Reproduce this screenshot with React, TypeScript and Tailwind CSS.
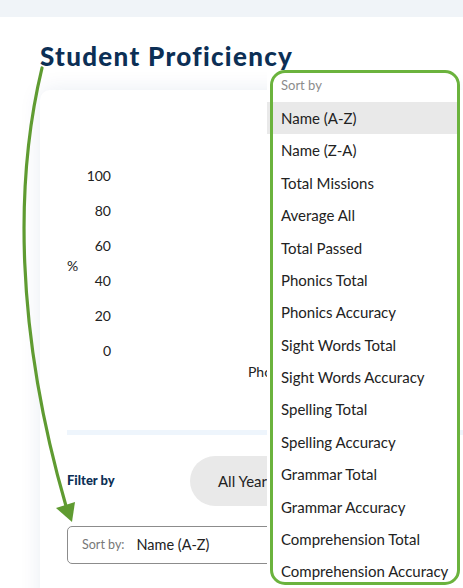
const sortOptions = [
  "Name (A-Z)",
  "Name (Z-A)",
  "Total Missions",
  "Average All",
  "Total Passed",
  "Phonics Total",
  "Phonics Accuracy",
  "Sight Words Total",
  "Sight Words Accuracy",
  "Spelling Total",
  "Spelling Accuracy",
  "Grammar Total",
  "Grammar Accuracy",
  "Comprehension Total",
  "Comprehension Accuracy",
];

const ticks = [100, 80, 60, 40, 20, 0];

export default function App() {
  const selected = "Name (A-Z)";

  return (
    <div className="relative w-[463px] h-[588px] overflow-hidden bg-white font-['Lato','Noto_Sans',sans-serif] text-[#222]">
      {/* Top bar */}
      <div className="h-[17px] bg-[#f0f4f8]" />

      <div className="pl-[40px] pt-[23px]">
        <h1 className="text-[26px] leading-[32px] font-black tracking-[1.3px] text-[#0c2f55] whitespace-nowrap">
          Student Proficiency
        </h1>

        {/* Card */}
        <div className="mt-[18px] h-[520px] rounded-tl-[10px] bg-white shadow-[0_0_22px_rgba(20,60,120,0.09)] pl-[27px]">
          {/* Chart */}
          <div className="pt-[68px] flex">
            <div className="w-[22px] flex items-center pt-[4px]">
              <span className="text-[14px]">%</span>
            </div>
            <div className="flex flex-col w-[22px] items-end">
              {ticks.map((t) => (
                <div key={t} className="h-[35px] flex items-center text-[14px]">
                  {t}
                </div>
              ))}
            </div>
          </div>
          <div className="-mt-[5px] w-[203px] overflow-hidden whitespace-nowrap pl-[181px] h-[17px] text-[14px] leading-[17px]">
            Phonics
          </div>

          {/* Separator */}
          <div className="mt-[50px] h-[5px] bg-[#eef5fc]" />

          {/* Filters */}
          <div className="mt-[21px] flex items-center w-[203px] overflow-hidden">
            <div className="w-[123px] shrink-0 text-[13px] font-black text-[#0c2f55]">Filter by</div>
            <div className="h-[50px] w-[180px] shrink-0 rounded-full bg-[#e9e9e9] flex items-center pl-[28px] text-[15px] whitespace-nowrap">
              All Years
            </div>
          </div>

          <div className="mt-[20px] h-[38px] w-[260px] rounded-[5px] border border-[#8c8c8c] flex items-center pl-[14px]">
            <span className="text-[12.5px] text-[#777]">Sort by:</span>
            <span className="ml-[12px] text-[14.5px]">Name (A-Z)</span>
          </div>
        </div>
      </div>

      {/* Sort dropdown menu */}
      <div className="absolute left-[267px] top-[70px] w-[191px] bg-white">
        <div className="h-[32px] flex items-center pl-[14px] text-[13px] text-[#8c8c8c]">Sort by</div>
        {sortOptions.map((opt) => (
          <div
            key={opt}
            className={`h-[32.4px] flex items-center pl-[14px] text-[15px] whitespace-nowrap ${
              opt === selected ? "bg-[#e9e9e9]" : ""
            }`}
          >
            {opt}
          </div>
        ))}
      </div>

      {/* Highlight outline */}
      <div className="absolute left-[270px] top-[70px] w-[190px] h-[515px] rounded-[15px] border-[3.5px] border-[#6bb33d]" />

      {/* Annotation arrow */}
      <svg className="absolute left-0 top-0" width="463" height="588" viewBox="0 0 463 588" fill="none">
        <path d="M42 68 C 15 180, 15 330, 66 506" stroke="#5f9b31" strokeWidth="3.2" strokeLinecap="round" />
        <polygon points="56,508 75,502 72,522" fill="#5f9b31" />
      </svg>
    </div>
  );
}
